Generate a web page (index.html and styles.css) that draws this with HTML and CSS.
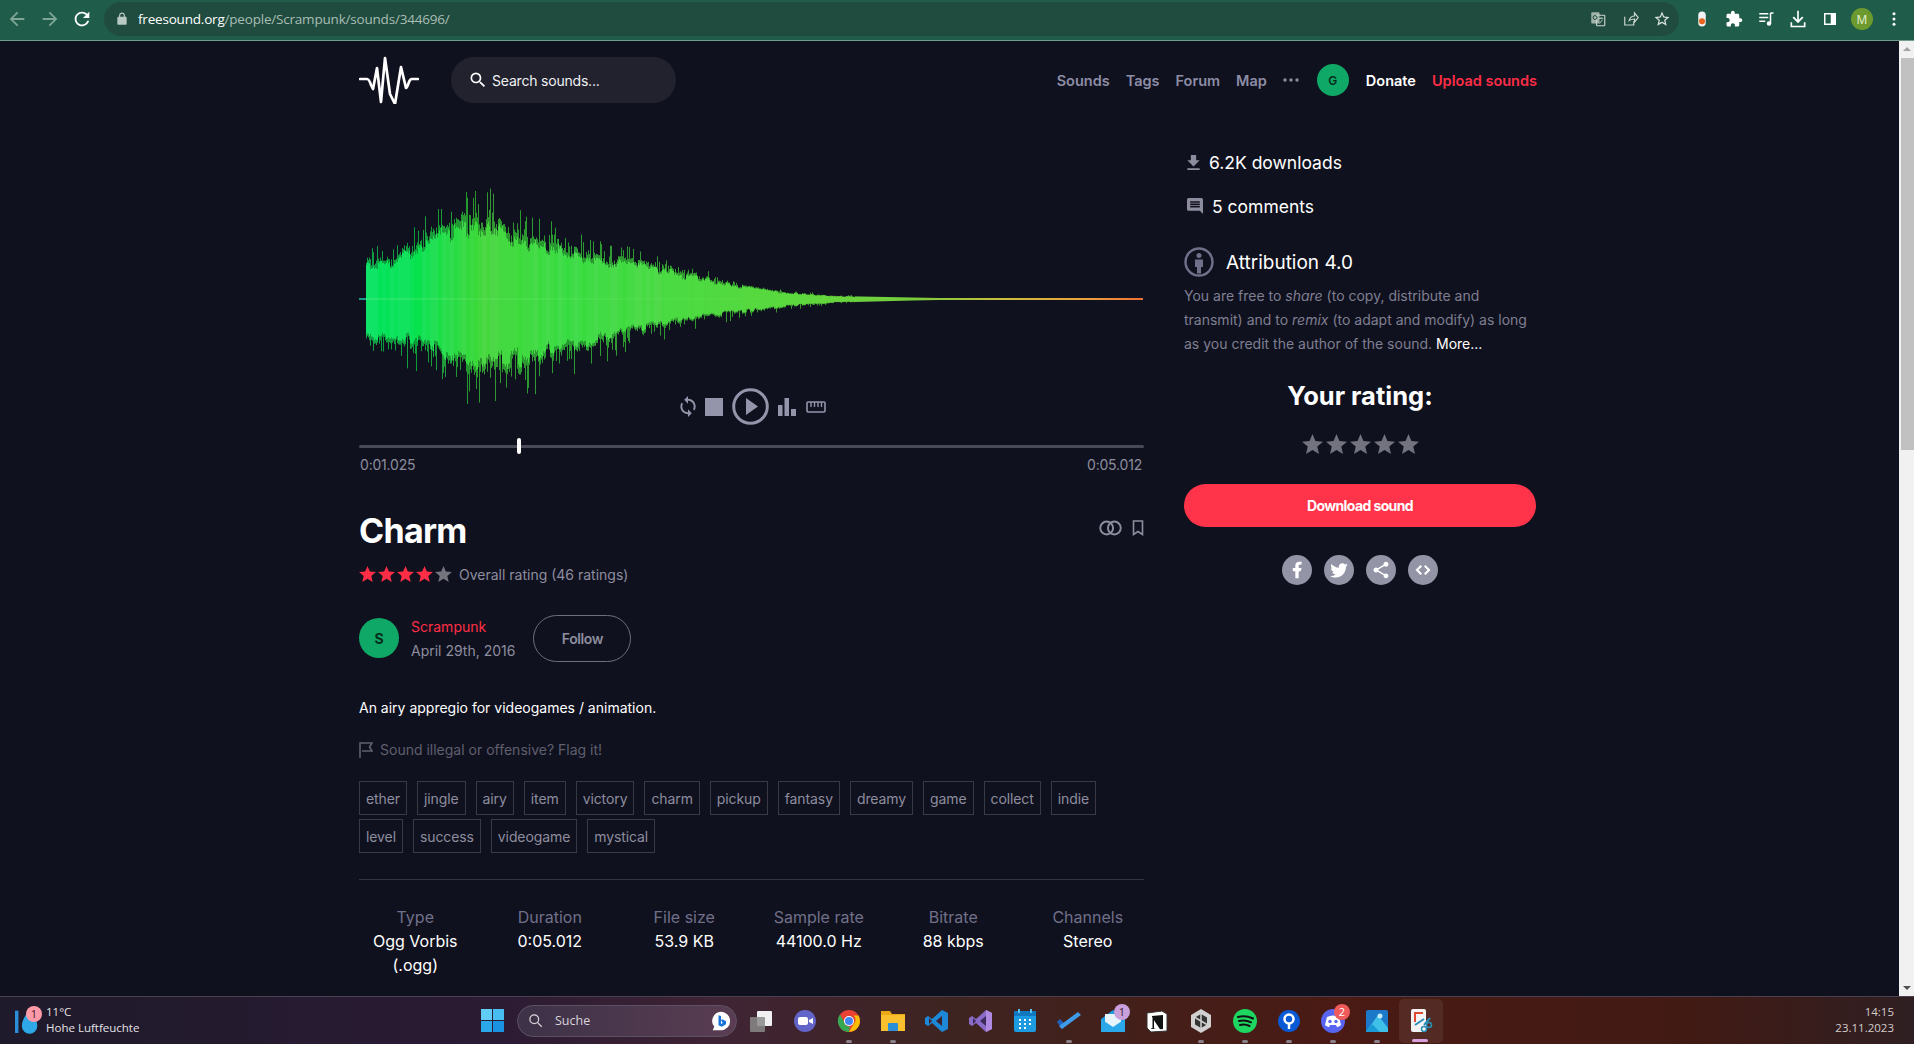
FILE: index.html
```html
<!DOCTYPE html>
<html lang="en">
<head>
<meta charset="utf-8">
<title>Charm - Freesound</title>
<link rel="stylesheet" href="styles.css">
</head>
<body>
<div class="chrome">
  <svg class="ci dim" viewBox="0 0 24 24"><path d="M20 11H7.83l5.59-5.59L12 4l-8 8 8 8 1.41-1.41L7.83 13H20v-2z"/></svg>
  <svg class="ci dim" viewBox="0 0 24 24"><path d="M12 4l-1.41 1.41L16.17 11H4v2h12.17l-5.58 5.59L12 20l8-8z"/></svg>
  <svg class="ci" viewBox="0 0 24 24"><path d="M17.65 6.35C16.2 4.9 14.21 4 12 4c-4.42 0-7.99 3.58-7.99 8s3.57 8 7.99 8c3.73 0 6.84-2.55 7.73-6h-2.08c-.82 2.33-3.04 4-5.65 4-3.31 0-6-2.69-6-6s2.69-6 6-6c1.66 0 3.14.69 4.22 1.78L13 11h7V4l-2.35 2.35z"/></svg>
  <div class="omnibox">
    <svg class="lock" viewBox="0 0 24 24"><path d="M18 8h-1V6c0-2.76-2.24-5-5-5S7 3.24 7 6v2H6c-1.1 0-2 .9-2 2v10c0 1.1.9 2 2 2h12c1.1 0 2-.9 2-2V10c0-1.1-.9-2-2-2zM9 6c0-1.66 1.34-3 3-3s3 1.34 3 3v2H9V6z"/></svg>
    <span class="url"><b>freesound.org</b>/people/Scrampunk/sounds/344696/</span>
    <svg class="oi translate" viewBox="0 0 24 24"><rect x="3" y="3" width="11" height="15" rx="1" fill="#9fb3aa"/><rect x="10" y="7" width="11" height="14" rx="1" fill="none" stroke="#c8d4ce" stroke-width="1.5"/><circle cx="8" cy="10" r="2.6" fill="none" stroke="#1f4c3e" stroke-width="1.3"/><path d="M13 11h6M16 10v2M14 18l4-5" stroke="#c8d4ce" stroke-width="1.2" fill="none"/></svg>
    <svg class="oi" viewBox="0 0 24 24"><path d="M5 9v11h12v-5M11 14c1-4 4-6 7-6V4l5 6-5 6v-4c-3 0-5 .5-7 2z" fill="none" stroke="#c8d4ce" stroke-width="1.6"/></svg>
    <svg class="oi" viewBox="0 0 24 24"><path fill="#dfe7e3" d="M22 9.24l-7.19-.62L12 2 9.19 8.63 2 9.24l5.46 4.73L5.82 21 12 17.27 18.18 21l-1.63-7.03L22 9.24zM12 15.4l-3.76 2.27 1-4.28-3.32-2.88 4.38-.38L12 6.1l1.71 4.04 4.38.38-3.32 2.88 1 4.28L12 15.4z"/></svg>
  </div>
  <div class="exts">
    <svg class="ei" viewBox="0 0 24 24"><rect x="7" y="2" width="10" height="20" rx="5" fill="#f2f2f2"/><circle cx="12" cy="15" r="4" fill="#e8641f"/></svg>
    <svg class="ei" viewBox="0 0 24 24"><path fill="#fff" d="M20.5 11H19V7c0-1.1-.9-2-2-2h-4V3.5C13 2.12 11.88 1 10.5 1S8 2.12 8 3.5V5H4c-1.1 0-1.99.9-1.99 2v3.8H3.5c1.49 0 2.7 1.21 2.7 2.7s-1.21 2.7-2.7 2.7H2V20c0 1.1.9 2 2 2h3.8v-1.5c0-1.49 1.21-2.7 2.7-2.7 1.49 0 2.7 1.21 2.7 2.7V22H17c1.1 0 2-.9 2-2v-4h1.5c1.38 0 2.5-1.12 2.5-2.5S21.88 11 20.5 11z"/></svg>
    <svg class="ei" viewBox="0 0 24 24"><path d="M3 5h12M3 10h12M3 15h8" stroke="#fff" stroke-width="2" fill="none"/><path d="M18 4v13M18 4h4" stroke="#fff" stroke-width="2" fill="none"/><circle cx="16" cy="18" r="3" fill="#fff"/></svg>
    <svg class="ei ei-dl" viewBox="0 0 24 24"><path fill="#fff" d="M13 2v11l4-4 1.500 1.500L12 17l-6.500-6.500L7 9l4 4V2zM3 16h2v4h14v-4h2v6H3z"/></svg>
    <svg class="ei" viewBox="0 0 24 24"><path fill="#fff" d="M4 4h16v16H4zM6 6v12h7V6z" fill-rule="evenodd"/></svg>
    <span class="profile">M</span>
    <svg class="ei" viewBox="0 0 24 24"><circle cx="12" cy="5" r="2" fill="#fff"/><circle cx="12" cy="12" r="2" fill="#fff"/><circle cx="12" cy="19" r="2" fill="#fff"/></svg>
  </div>
</div>

<div class="viewport">
  <div class="page">
    <div class="wrap">
      <header class="topbar">
        <svg class="logo" viewBox="0 0 60 48"><path d="M1 23h7q2 0 4 6l2 4 4-21 4 34 4-44 5 36 5 10 6-37 5 21q1 0 3-6 1-3 3-3h6" fill="none" stroke="#fff" stroke-width="2.700" stroke-linecap="round" stroke-linejoin="round"/></svg>
        <div class="search">
          <svg class="search-icon" viewBox="0 0 24 24"><path fill="#fff" d="M15.5 14h-.79l-.28-.27A6.471 6.471 0 0 0 16 9.5 6.5 6.5 0 1 0 9.5 16c1.61 0 3.09-.59 4.23-1.57l.27.28v.79l5 4.99L20.49 19l-4.99-5zm-6 0C7.01 14 5 11.99 5 9.5S7.01 5 9.5 5 14 7.01 14 9.5 11.99 14 9.5 14z"/></svg>
          <span>Search sounds...</span>
        </div>
        <nav class="nav">
          <a>Sounds</a><a>Tags</a><a>Forum</a><a>Map</a>
          <svg class="dots" viewBox="0 0 16 4"><circle cx="2" cy="2" r="1.7"/><circle cx="8" cy="2" r="1.7"/><circle cx="14" cy="2" r="1.7"/></svg>
          <span class="avatar-sm">G</span>
          <a class="donate">Donate</a>
          <a class="upload">Upload sounds</a>
        </nav>
      </header>

      <div class="columns">
        <main class="left">
          <div class="player">
            <canvas id="wave" class="wave" width="785" height="240"></canvas>
            <div class="controls">
              <svg class="c-loop" viewBox="4 1 16 22"><path d="M12 4V1L8 5l4 4V6c3.31 0 6 2.69 6 6 0 1.01-.25 1.97-.7 2.8l1.46 1.46C19.54 15.03 20 13.57 20 12c0-4.42-3.58-8-8-8zm0 14c-3.31 0-6-2.69-6-6 0-1.01.25-1.97.7-2.8L5.24 7.74C4.46 8.97 4 10.43 4 12c0 4.42 3.58 8 8 8v3l4-4-4-4v3z"/></svg>
              <span class="c-stop"></span>
              <svg class="c-play" viewBox="0 0 37 37"><circle cx="18.5" cy="18.5" r="16.8" fill="none" stroke-width="3"/><path d="M14 10l12 8.5L14 27z"/></svg>
              <svg class="c-bars" viewBox="0 0 18 18"><rect x="0" y="7" width="4.5" height="11"/><rect x="6.5" y="0" width="4.5" height="18"/><rect x="13" y="11" width="5" height="7"/></svg>
              <svg class="c-ruler" viewBox="0 0 20 12"><rect x="1" y="1" width="18" height="10" rx="1" fill="none" stroke-width="1.6"/><path d="M5 1v5M8.500 1v5M12 1v5M15.500 1v5" stroke-width="1.4"/></svg>
            </div>
          </div>
          <div class="scale"><span class="handle"></span></div>
          <div class="times"><span>0:01.025</span><span>0:05.012</span></div>

          <div class="title-row">
            <h1>Charm</h1>
            <div class="title-icons">
              <svg class="rings" viewBox="0 0 24 16"><circle cx="8" cy="8" r="6.700"/><circle cx="16" cy="8" r="6.700"/></svg>
              <svg class="bookmark" viewBox="0 0 12 16"><path d="M1.500 1h9v13.500L6 11.500l-4.500 3z"/></svg>
            </div>
          </div>

          <div class="rating">
            <svg class="star red" viewBox="2 2 20 19"><path d="M12 17.270L18.180 21l-1.640-7.030L22 9.240l-7.190-.61L12 2 9.190 8.630 2 9.240l5.460 4.730L5.820 21z"/></svg>
            <svg class="star red" viewBox="2 2 20 19"><path d="M12 17.270L18.180 21l-1.640-7.030L22 9.240l-7.190-.61L12 2 9.190 8.630 2 9.240l5.460 4.730L5.820 21z"/></svg>
            <svg class="star red" viewBox="2 2 20 19"><path d="M12 17.270L18.180 21l-1.640-7.030L22 9.240l-7.190-.61L12 2 9.190 8.630 2 9.240l5.460 4.730L5.820 21z"/></svg>
            <svg class="star red" viewBox="2 2 20 19"><path d="M12 17.270L18.180 21l-1.640-7.030L22 9.240l-7.190-.61L12 2 9.190 8.630 2 9.240l5.460 4.730L5.820 21z"/></svg>
            <svg class="star grey" viewBox="2 2 20 19"><path d="M12 17.270L18.180 21l-1.640-7.030L22 9.240l-7.190-.61L12 2 9.190 8.630 2 9.240l5.460 4.730L5.820 21z"/></svg>
            <span class="rating-text">Overall rating (46 ratings)</span>
          </div>

          <div class="author">
            <span class="avatar">S</span>
            <div class="author-text">
              <a class="author-name">Scrampunk</a>
              <span class="author-date">April 29th, 2016</span>
            </div>
            <button class="follow">Follow</button>
          </div>

          <p class="desc">An airy appregio for videogames / animation.</p>

          <div class="flag">
            <svg class="flag-icon" viewBox="0 0 14 16"><path d="M1 16V1h12l-2.500 4L13 9H3" fill="none" stroke-width="1.600"/></svg>
            <span>Sound illegal or offensive? Flag it!</span>
          </div>

          <div class="tags">
            <a>ether</a><a>jingle</a><a>airy</a><a>item</a><a>victory</a><a>charm</a><a>pickup</a><a>fantasy</a><a>dreamy</a><a>game</a><a>collect</a><a>indie</a><a>level</a><a>success</a><a>videogame</a><a>mystical</a>
          </div>

          <hr class="rule">

          <dl class="stats">
            <div><dt>Type</dt><dd>Ogg Vorbis (.ogg)</dd></div>
            <div><dt>Duration</dt><dd>0:05.012</dd></div>
            <div><dt>File size</dt><dd>53.9 KB</dd></div>
            <div><dt>Sample rate</dt><dd>44100.0 Hz</dd></div>
            <div><dt>Bitrate</dt><dd>88 kbps</dd></div>
            <div><dt>Channels</dt><dd>Stereo</dd></div>
          </dl>
        </main>

        <aside class="right">
          <div class="stat-line">
            <svg class="dl-icon" viewBox="5 3 14 17"><path d="M19 9h-4V3H9v6H5l7 7 7-7zM5 18v2h14v-2H5z"/></svg>
            <span>6.2K downloads</span>
          </div>
          <div class="stat-line second">
            <svg class="cm-icon" viewBox="2 2 20 20"><path d="M21.990 4c0-1.100-.890-2-1.990-2H4c-1.100 0-2 .900-2 2v12c0 1.100.900 2 2 2h14l4 4-.010-18zM18 14H6v-2h12v2zm0-3H6V9h12v2zm0-3H6V6h12v2z"/></svg>
            <span>5 comments</span>
          </div>
          <div class="license">
            <svg class="by-icon" viewBox="0 0 30 30"><circle cx="15" cy="15" r="13.500" fill="none" stroke-width="2.400"/><circle cx="15" cy="8.500" r="2.500" class="fillg"/><path class="fillg" d="M11 12.500h8v7.500h-2v6.500h-4V20h-2z"/></svg>
            <span>Attribution 4.0</span>
          </div>
          <p class="license-text">
            <span class="ln">You are free to <i>share</i> (to copy, distribute and</span>
            <span class="ln">transmit) and to <i>remix</i> (to adapt and modify) as long</span>
            <span class="ln">as you credit the author of the sound. <a>More...</a></span>
          </p>
          <h2 class="your-rating">Your rating:</h2>
          <div class="your-stars">
            <svg viewBox="2 2 20 19"><path d="M12 17.270L18.180 21l-1.640-7.030L22 9.240l-7.190-.61L12 2 9.190 8.630 2 9.240l5.460 4.730L5.820 21z"/></svg>
            <svg viewBox="2 2 20 19"><path d="M12 17.270L18.180 21l-1.640-7.030L22 9.240l-7.190-.61L12 2 9.190 8.630 2 9.240l5.460 4.730L5.820 21z"/></svg>
            <svg viewBox="2 2 20 19"><path d="M12 17.270L18.180 21l-1.640-7.030L22 9.240l-7.190-.61L12 2 9.190 8.630 2 9.240l5.460 4.730L5.820 21z"/></svg>
            <svg viewBox="2 2 20 19"><path d="M12 17.270L18.180 21l-1.640-7.030L22 9.240l-7.190-.61L12 2 9.190 8.630 2 9.240l5.460 4.730L5.820 21z"/></svg>
            <svg viewBox="2 2 20 19"><path d="M12 17.270L18.180 21l-1.640-7.030L22 9.240l-7.190-.61L12 2 9.190 8.630 2 9.240l5.460 4.730L5.820 21z"/></svg>
          </div>
          <button class="download">Download sound</button>
          <div class="social">
            <span><svg viewBox="0 0 24 24"><path d="M14 13.500h2.500l1-4H14v-2c0-1.030 0-2 2-2h1.500V2.140c-.326-.043-1.557-.14-2.857-.14C11.928 2 10 3.657 10 6.700v2.800H7v4h3V22h4v-8.500z"/></svg></span>
            <span><svg viewBox="0 0 24 24"><path d="M22.460 6c-.770.350-1.600.580-2.460.690.880-.530 1.560-1.370 1.880-2.380-.830.500-1.750.850-2.720 1.050C18.370 4.500 17.260 4 16 4c-2.350 0-4.270 1.920-4.270 4.290 0 .340.040.670.110.980C8.280 9.090 5.110 7.380 3 4.790c-.370.630-.580 1.370-.580 2.150 0 1.490.750 2.810 1.910 3.560-.710 0-1.370-.200-1.950-.500v.030c0 2.080 1.480 3.820 3.440 4.210a4.220 4.220 0 0 1-1.930.070 4.280 4.280 0 0 0 4 2.980 8.521 8.521 0 0 1-5.330 1.840c-.340 0-.680-.020-1.020-.060C3.440 20.290 5.700 21 8.120 21 16 21 20.330 14.460 20.330 8.790c0-.190 0-.370-.010-.560.840-.600 1.560-1.360 2.140-2.230z"/></svg></span>
            <span><svg viewBox="0 0 24 24"><path d="M18 16.080c-.760 0-1.440.300-1.960.770L8.910 12.700c.050-.230.090-.460.090-.700s-.040-.470-.090-.700l7.050-4.110c.540.500 1.250.810 2.040.810 1.660 0 3-1.340 3-3s-1.340-3-3-3-3 1.340-3 3c0 .240.040.470.090.700L8.040 9.810C7.500 9.310 6.790 9 6 9c-1.660 0-3 1.340-3 3s1.340 3 3 3c.790 0 1.500-.310 2.040-.810l7.120 4.160c-.050.210-.080.430-.080.650 0 1.610 1.310 2.920 2.920 2.920s2.920-1.310 2.920-2.920-1.310-2.920-2.920-2.920z"/></svg></span>
            <span><svg viewBox="0 0 24 24"><path d="M9 6l-6 6 6 6 1.800-1.800L6.600 12l4.200-4.200zM15 6l-1.800 1.800 4.200 4.200-4.200 4.200L15 18l6-6z"/></svg></span>
          </div>
        </aside>
      </div>
    </div>
  </div>
  <div class="scrollbar">
    <span class="sb-up"></span>
    <span class="sb-thumb"></span>
    <span class="sb-down"></span>
  </div>
</div>

<footer class="taskbar">
  <div class="weather">
    <svg class="weather-icon" viewBox="0 0 28 32"><rect x="0" y="4" width="4" height="26" fill="#2a8fd8"/><path d="M17 2c5 8 9 13 9 20a9 9 0 0 1-18 0c0-7 4-12 9-20z" fill="#2ea8e6"/></svg>
    <span class="badge pink">1</span>
    <div class="weather-text"><span>11°C</span><span>Hohe Luftfeuchte</span></div>
  </div>
  <div class="apps">
    <svg class="win" viewBox="0 0 23 23"><rect width="11" height="11" fill="#5fcdf5"/><rect x="12" width="11" height="11" fill="#48bdf0"/><rect y="12" width="11" height="11" fill="#2aa8ea"/><rect x="12" y="12" width="11" height="11" fill="#1a94e2"/></svg>
    <div class="tb-search">
      <svg class="tb-search-icon" viewBox="0 0 24 24"><circle cx="10" cy="10" r="7" fill="none" stroke="#d8d4da" stroke-width="2"/><path d="M15 15l7 7" stroke="#d8d4da" stroke-width="2"/></svg>
      <span>Suche</span>
      <svg class="bing" viewBox="0 0 24 24"><path d="M12 1a11 11 0 0 1 0 22H2l2-4a11 11 0 0 1 8-18z" fill="#fff"/><path d="M9 5v12l4 2 5-3v-4l-5-2-1 1 2 3-2 2V6z" fill="#1673d8"/></svg>
    </div>
    <div class="app"><svg viewBox="0 0 24 24"><rect x="8" y="2" width="15" height="15" rx="1" fill="#f0f0f0"/><rect x="1" y="8" width="15" height="15" rx="1" fill="#8a8a8a" opacity=".85"/></svg></div>
    <div class="app"><svg viewBox="0 0 24 24"><circle cx="12" cy="12" r="11" fill="#6264c8"/><rect x="5" y="8" width="10" height="8" rx="2" fill="#fff"/><path d="M16 11l4-2v6l-4-2z" fill="#fff"/></svg></div>
    <div class="app run"><svg viewBox="0 0 24 24"><circle cx="12" cy="12" r="11" fill="#e94235"/><path d="M21.500 6.500A11 11 0 0 1 12 23l4.800-8.300A5.500 5.500 0 0 0 16.500 6.500z" fill="#fbbc04"/><path d="M12 23A11 11 0 0 1 3 5.500l4.800 8.700a5.500 5.500 0 0 0 5 3.300z" fill="#34a853"/><circle cx="12" cy="12" r="5" fill="#fff"/><circle cx="12" cy="12" r="4" fill="#4285f4"/></svg></div>
    <div class="app run"><svg viewBox="0 0 24 24"><path d="M0 2h9l2 3h13v17H0z" fill="#e8a818"/><rect y="6" width="24" height="16" fill="#fbc02d"/><rect x="7" y="14" width="10" height="8" rx="1" fill="#2a8fd8"/></svg></div>
    <div class="app"><svg viewBox="0 0 24 24"><path d="M17 1l6 3v16l-6 3L7 14l-4 3-3-2V9l3-2 4 3z" fill="#1e88d8"/><path d="M17 7l-6 5 6 5z" fill="#3a2130"/><path d="M4 9l3 3-3 3z" fill="#3a2130"/></svg></div>
    <div class="app"><svg viewBox="0 0 24 24"><path d="M17 1l6 3v16l-6 3L7 14l-4 3-3-2V9l3-2 4 3z" fill="#8a6cc8"/><path d="M17 7l-6 5 6 5z" fill="#3c2a5a"/><path d="M4 9l3 3-3 3z" fill="#3c2a5a"/><path d="M17 1l6 3v16l-6 3z" fill="#b08ae0"/></svg></div>
    <div class="app"><svg viewBox="0 0 24 24"><rect x="1" y="2" width="22" height="21" rx="2" fill="#1c9be0"/><rect x="1" y="2" width="22" height="5" fill="#0f78c0"/><path d="M6 0v4M18 0v4" stroke="#5cc0f0" stroke-width="2"/><path d="M6 11h2M11 11h2M16 11h2M6 15h2M11 15h2M16 15h2M6 19h2M11 19h2" stroke="#fff" stroke-width="2"/></svg></div>
    <div class="app run"><svg viewBox="0 0 24 24"><path d="M0 13l3-3 6 6-4 4z" fill="#1f5fbf"/><path d="M5 20l-3-3L21 3l3 3z" fill="#3f9be8"/></svg></div>
    <div class="app"><svg viewBox="0 0 24 24"><path d="M12 1L0 10v13h24V10z" fill="#1c9be0"/><path d="M4 5h16v12l-8 3-8-3z" fill="#e8f4fb"/><path d="M0 10l12 8 12-8v13H0z" fill="#2aa8ea"/></svg><span class="badge lilac">1</span></div>
    <div class="app"><svg viewBox="0 0 24 24"><path d="M2 4l15-2 5 3v17l-16 1-4-4z" fill="#fff"/><path d="M2 4l15-2 5 3v17l-16 1-4-4z" fill="none" stroke="#333" stroke-width="1"/><path d="M7 7l11-1v14l-3 .200-6-9v8l2 .500-5 .300v-.500l1.500-.500V8.500L7 8z" fill="#111"/></svg></div>
    <div class="app run"><svg viewBox="0 0 24 24"><path d="M12 0l10 6v12l-10 6L2 18V6z" fill="#d0d0d0"/><path d="M12 5l6 3.500v7L12 19l-6-3.500v-7z" fill="#333"/><path d="M12 5v14M6 8.500l12 7" stroke="#d0d0d0" stroke-width="1.500"/></svg></div>
    <div class="app run"><svg viewBox="0 0 24 24"><circle cx="12" cy="12" r="12" fill="#1ed760"/><path d="M5 8c5-1.500 10-1 15 1.500M6 12c4-1 8-.7 12 1.300M7 16c3.500-.8 6.500-.5 9.500 1" fill="none" stroke="#111" stroke-width="2" stroke-linecap="round"/></svg></div>
    <div class="app run"><svg viewBox="0 0 24 24"><circle cx="12" cy="12" r="11" fill="#0a5ad6"/><circle cx="12" cy="10" r="4.500" fill="none" stroke="#fff" stroke-width="2.500"/><path d="M12 14v6" stroke="#fff" stroke-width="2.500"/></svg></div>
    <div class="app run"><svg viewBox="0 0 24 24"><circle cx="12" cy="12" r="12" fill="#5865f2"/><path d="M6 8c4-2 8-2 12 0l2 8c-2 1.500-3 2-4 2l-1-2H9l-1 2c-1 0-2-.5-4-2z" fill="#fff"/><circle cx="9" cy="12.500" r="1.700" fill="#5865f2"/><circle cx="15" cy="12.500" r="1.700" fill="#5865f2"/></svg><span class="badge coral">2</span></div>
    <div class="app run"><svg viewBox="0 0 24 24"><rect x="1" y="1" width="22" height="22" rx="2" fill="#1c78c8"/><path d="M1 23L13 6l10 13v4z" fill="#3fc0e8"/><circle cx="15" cy="7" r="2.500" fill="#bfe8fa"/><path d="M1 23l6-8 8 8z" fill="#1a9bd8"/></svg></div>
    <div class="app active"><svg viewBox="0 0 24 24"><rect x="2" y="0" width="15" height="23" rx="2" fill="#f4f4f4"/><path d="M5 3h9v2H7v8H5z" fill="#e04a30"/><path d="M6 16l9-6M15 16l6-7" stroke="#2a8fb8" stroke-width="2"/><circle cx="20" cy="16" r="2.500" fill="none" stroke="#2a8fb8" stroke-width="1.500"/><circle cx="15" cy="20" r="2.500" fill="none" stroke="#2a8fb8" stroke-width="1.500"/></svg></div>
  </div>
  <div class="clock"><span>14:15</span><span>23.11.2023</span></div>
</footer>
<script src="script.js"></script>
</body>
</html>
```

FILE: styles.css
```css
* { box-sizing: border-box; }
html, body { margin: 0; height: 100%; overflow: hidden; }
body {
  width: 1914px;
  height: 1044px;
  display: flex;
  flex-direction: column;
  background: #10111e;
  color: #fff;
  font-family: Inter, "Liberation Sans", sans-serif;
  font-size: 14px;
}
a { color: inherit; }

/* browser chrome */
.chrome {
  height: 41px;
  flex: none;
  display: flex;
  align-items: center;
  background: #1f5c49;
  border-bottom: 1px solid #6f9e8c;
  padding: 0 0 2px 0;
}
.ci { width: 22px; height: 22px; fill: #fff; flex: none; }
.ci.dim { fill: #7fa597; }
.ci:nth-child(1) { margin-left: 6px; margin-right: 11px; }
.ci:nth-child(2) { margin-right: 10px; }
.ci:nth-child(3) { margin-right: 11px; }
.omnibox {
  width: 1575px;
  height: 34px;
  background: #204c3f;
  border-radius: 17px;
  display: flex;
  align-items: center;
  padding: 0 8px 0 11px;
  flex: none;
}
.lock { width: 14px; height: 14px; fill: #b8c8c2; flex: none; }
.url {
  margin-left: 9px;
  font-family: "Open Sans", sans-serif;
  font-size: 13.5px;
  letter-spacing: -.2px;
  color: #a9bdb5;
  flex: 1;
}
.url b { color: #fff; font-weight: 400; }
.oi { width: 18px; height: 18px; margin-left: 14px; flex: none; }
.translate { margin-left: 0; }
.exts { display: flex; align-items: center; margin-left: 14px; gap: 14px; flex: none; }
.ei { width: 18px; height: 18px; flex: none; }
.ei-dl { width: 20px; height: 20px; margin: 0 -1px; }
.profile {
  width: 22px; height: 22px; border-radius: 50%;
  background: #6c9a2e;
  display: flex; align-items: center; justify-content: center;
  font: 12px "Open Sans", sans-serif;
  color: #e7f2d8;
  margin: 0 -2px;
}

/* viewport */
.viewport { flex: 1; min-height: 0; display: flex; }
.page { flex: 1; min-width: 0; overflow: hidden; }
.wrap { width: 1181px; margin: 0 auto; }
.scrollbar {
  width: 15px;
  flex: none;
  background: #f1f1f1;
  display: flex;
  flex-direction: column;
  align-items: stretch;
}
.sb-up { height: 17px; position: relative; }
.sb-up::after {
  content: "";
  position: absolute;
  left: 4px; top: 6px;
  border: 4px solid transparent;
  border-top: 0;
  border-bottom: 4px solid #a3a3a3;
}
.sb-thumb { height: 392px; background: #c1c1c1; margin-left: 2px; }
.sb-down { height: 17px; margin-top: auto; position: relative; }
.sb-down::after {
  content: "";
  position: absolute;
  left: 4px; top: 7px;
  border: 4px solid transparent;
  border-bottom: 0;
  border-top: 4px solid #505050;
}

/* header */
.topbar { display: flex; align-items: center; height: 48px; margin-top: 15px; padding-right: 3px; }
.logo { width: 60px; height: 48px; flex: none; }
.search {
  margin-left: 32px;
  width: 225px;
  height: 46px;
  border-radius: 23px;
  background: #21222d;
  display: flex;
  align-items: center;
  padding-left: 17px;
  font-size: 14px;
  letter-spacing: -.2px;
  color: #f0f0f4;
  gap: 4px;
}
.search-icon { width: 20px; height: 20px; flex: none; }
.nav { margin-left: auto; display: flex; align-items: center; font-size: 14.5px; font-weight: 600; color: #8d8da6; }
.nav a { margin-right: 16px; }
.dots { width: 16px; height: 4px; fill: #8d8da6; margin-right: 18px; }
.avatar-sm {
  width: 32px; height: 32px; border-radius: 50%;
  background: #0fa866;
  color: #062c1c;
  font-size: 12px;
  font-weight: 600;
  display: flex; align-items: center; justify-content: center;
  margin-right: 17px;
}
.nav .donate { color: #fff; }
.nav .upload { color: #ff2d46; margin-right: 0; }

/* columns */
.columns { display: grid; grid-template-columns: 785px 352px; column-gap: 40px; }
.left { margin-top: 76px; min-width: 0; }
.right { margin-top: 46px; min-width: 0; }

/* player */
.player { position: relative; height: 240px; }
.wave { display: block; width: 785px; height: 240px; }
.controls {
  position: absolute;
  left: 0; right: 0; top: 208px;
  height: 37px;
  display: flex;
  align-items: center;
  justify-content: center;
  gap: 9px;
  padding-left: 2px;
  fill: #9494ab;
  stroke: #9494ab;
}
.controls svg path, .controls svg rect { stroke: inherit; }
.c-loop { width: 16px; height: 21px; stroke: none; }
.c-stop { width: 18px; height: 18px; background: #9494ab; }
.c-play { width: 37px; height: 37px; }
.controls .c-loop path, .controls .c-play path, .controls .c-bars rect { stroke: none; }
.c-bars { width: 18px; height: 18px; stroke: none; }
.c-ruler { width: 20px; height: 12px; fill: none; margin-left: 1px; }

.scale { position: relative; height: 3px; margin-top: 25px; background: #4a4a57; border-radius: 2px; }
.handle {
  position: absolute;
  left: 158px; top: -7px;
  width: 4px; height: 16px;
  background: #fff;
  border-radius: 2px;
}
.times {
  display: flex;
  justify-content: space-between;
  margin-top: 7px;
  padding: 0 2px 0 1px;
  line-height: 20px;
  color: #8d8d9f;
  font-size: 14px;
  letter-spacing: -.2px;
}

/* title */
.title-row { display: flex; align-items: center; justify-content: space-between; margin-top: 36px; height: 40px; }
h1 { margin: 0; font-size: 34px; line-height: 40px; font-weight: 700; letter-spacing: -.7px; }
.title-icons { display: flex; align-items: center; gap: 10px; margin-top: -6px; }
.rings { width: 23px; height: 16px; fill: none; stroke: #8d8da0; stroke-width: 2; }
.bookmark { width: 12px; height: 16px; fill: none; stroke: #8d8da0; stroke-width: 1.6; }

.rating { display: flex; align-items: center; margin-top: 13px; height: 20px; gap: 2px; }
.star { width: 17px; height: 16px; flex: none; }
.star.red { fill: #ff2d46; }
.star.grey { fill: #74747f; }
.rating-text { margin-left: 5px; color: #8d8d9f; font-size: 14px; }

.author { display: flex; align-items: center; margin-top: 30px; height: 48px; }
.avatar {
  width: 40px; height: 40px; border-radius: 50%;
  background: #0fa866;
  color: #062c1c;
  font-size: 14px; font-weight: 700;
  display: flex; align-items: center; justify-content: center;
  flex: none;
}
.author-text { margin-left: 12px; padding-top: 2px; display: flex; flex-direction: column; line-height: 24px; font-size: 14px; }
.author-name { color: #ff2d46; }
.author-date { color: #8d8d9f; }
.follow {
  margin-left: 18px;
  width: 98px; height: 47px;
  border-radius: 24px;
  border: 1px solid #6f6f78;
  background: transparent;
  color: #8d8d9f;
  font: 600 14px Inter, sans-serif;
  letter-spacing: -.4px;
}

.desc { margin: 34px 0 0; line-height: 24px; font-size: 14px; }
.flag { display: flex; align-items: center; margin-top: 18px; line-height: 24px; color: #5f5f6e; gap: 7px; font-size: 14px; }
.flag-icon { width: 14px; height: 16px; stroke: #5f5f6e; flex: none; }

.tags { display: flex; flex-wrap: wrap; gap: 4px 10px; margin-top: 19px; width: 760px; }
.tags a {
  height: 34px;
  padding: 0 6px;
  border: 1px solid #3a3a47;
  display: flex;
  align-items: center;
  color: #8d8d9f;
  font-size: 14px;
  letter-spacing: -.1px;
}

.rule { margin: 26px 0 0; border: 0; height: 1px; background: #33343f; }

.stats {
  display: grid;
  grid-template-columns: repeat(6, 134.5px);
  margin: 25px -11px 0;
  text-align: center;
  line-height: 24px;
  font-size: 16px;
}
.stats > div { padding: 0 12px; }
.stats dt { color: #70708a; }
.stats dd { margin: 0; }

/* right column */
.stat-line { display: flex; align-items: center; height: 24px; font-size: 17.5px; gap: 9px; padding-left: 3px; }
.stat-line.second { margin-top: 20px; }
.dl-icon { width: 13px; height: 15px; fill: #8d8d9f; flex: none; }
.cm-icon { width: 16px; height: 16px; fill: #8d8d9f; flex: none; }
.license { display: flex; align-items: center; margin-top: 29px; height: 30px; gap: 12px; font-size: 19px; }
.by-icon { width: 30px; height: 30px; stroke: #70708a; flex: none; }
.fillg { fill: #70708a; stroke: none; }
.license-text { margin: 7px 0 0; line-height: 24px; font-size: 14px; color: #7f7f92; }
.ln { display: block; }
.license-text a { color: #fff; }
.your-rating { margin: 24px 0 0; text-align: center; font-size: 25.5px; line-height: 32px; font-weight: 700; }
.your-stars { display: flex; justify-content: center; margin-top: 22px; height: 20px; gap: 3px; }
.your-stars svg { width: 21px; height: 20px; fill: #73737f; }
.download {
  display: block;
  width: 100%;
  height: 43px;
  margin-top: 30px;
  border: 0;
  border-radius: 22px;
  background: #ff3349;
  color: #fff;
  font: 700 14px Inter, sans-serif;
  letter-spacing: -.6px;
}
.social { display: flex; justify-content: center; gap: 12px; margin-top: 28px; }
.social span {
  width: 30px; height: 30px; border-radius: 50%;
  background: #9494a7;
  display: flex; align-items: center; justify-content: center;
}
.social svg { width: 20px; height: 20px; fill: #fff; }

/* taskbar */
.taskbar {
  height: 48px;
  flex: none;
  display: flex;
  align-items: center;
  background: linear-gradient(90deg, #1e1a2b 0, #2b1b33 26%, #3f2434 38%, #3e2420 50%, #4a1a14 70%, #421a14 88%, #2f1f22 100%);
  border-top: 1px solid #4a4050;
  font-family: "Open Sans", sans-serif;
  font-size: 11.5px;
  color: #e6e2e6;
}
.weather { display: flex; align-items: center; position: relative; margin-left: 15px; width: 466px; }
.weather-icon { width: 24px; height: 28px; flex: none; }
.weather-text { margin-left: 7px; display: flex; flex-direction: column; line-height: 16px; margin-top: -2px; }
.badge {
  position: absolute;
  width: 16px; height: 16px; border-radius: 50%;
  display: flex; align-items: center; justify-content: center;
  font-size: 11px;
  color: #3a1a2a;
}
.weather .badge { left: 11px; top: 0; }
.badge.pink { background: #ff9aa8; }
.app .badge { right: 5px; top: 5px; }
.badge.lilac { background: #c9a0dc; }
.badge.coral { background: #ee5a5a; color: #fff; }
.apps { display: flex; align-items: center; }
.win { width: 23px; height: 23px; flex: none; }
.tb-search {
  margin-left: 13px;
  width: 220px; height: 32px;
  border-radius: 16px;
  background: linear-gradient(90deg, #3d3248, #5a3d52);
  border: 1px solid #5e5064;
  display: flex; align-items: center;
  padding: 0 5px 0 10px;
  font-size: 12.5px;
  color: #d8d4da;
  flex: none;
}
.tb-search-icon { width: 15px; height: 15px; flex: none; }
.tb-search span { margin-left: 12px; flex: 1; }
.bing { width: 20px; height: 20px; flex: none; }
.app {
  width: 44px; height: 44px;
  position: relative;
  display: flex; align-items: center; justify-content: center;
  flex: none;
}
.app svg { width: 24px; height: 24px; }
.tb-search + .app { margin-left: 2px; }
.app.run::after {
  content: "";
  position: absolute;
  left: 19px; bottom: 0;
  width: 6px; height: 3px;
  border-radius: 2px;
  background: #8a8088;
}
.app.active { background: rgba(255,255,255,.07); border-radius: 5px; }
.app.active::after {
  content: "";
  position: absolute;
  left: 13px; bottom: 1px;
  width: 16px; height: 3px;
  border-radius: 2px;
  background: #d8a0dc;
}
.clock {
  margin-left: auto;
  margin-right: 20px;
  display: flex;
  flex-direction: column;
  align-items: flex-end;
  line-height: 16px;
  color: #d4cccc;
  margin-top: -2px;
}
```

FILE: script.js
```js
(function () {
  var c = document.getElementById('wave');
  var g = c.getContext('2d');
  var seed = 344696;
  function rnd() {
    seed = (seed * 1664525 + 1013904223) % 4294967296;
    return seed / 4294967296;
  }
  var top = [[0,36],[30,39],[46,52],[70,66],[100,76],[117,80],[140,70],[163,60],[214,47],[265,36],[316,26],[367,14],[418,6.5],[469,3],[546,1.5],[573,1],[778,1]];
  var bot = [[0,39],[51,46],[87,64],[117,72],[163,62],[214,48],[265,32],[316,22],[367,14],[418,7.5],[469,3.5],[546,1.5],[573,1],[778,1]];
  function env(t, x) {
    for (var i = 1; i < t.length; i++) {
      if (x <= t[i][0]) {
        var a = t[i - 1], b = t[i];
        return a[1] + (b[1] - a[1]) * (x - a[0]) / (b[0] - a[0]);
      }
    }
    return 1;
  }
  var stops = [[0,[8,228,98]],[50,[12,226,84]],[117,[70,216,62]],[200,[60,220,70]],[420,[90,216,62]],[546,[120,205,60]],[640,[205,190,60]],[720,[235,160,60]],[778,[240,110,50]]];
  function col(x) {
    for (var i = 1; i < stops.length; i++) {
      if (x <= stops[i][0]) {
        var a = stops[i - 1], b = stops[i], k = (x - a[0]) / (b[0] - a[0]);
        return [0, 1, 2].map(function (n) { return Math.round(a[1][n] + (b[1][n] - a[1][n]) * k); });
      }
    }
    return stops[stops.length - 1][1];
  }
  var cy = 119, ox = 7;
  g.fillStyle = '#1f9a8a';
  g.fillRect(0, cy - 1, 7, 2);
  var modT = 1, modB = 1, band = 0;
  for (var x = 0; x < 777; x++) {
    var cl = col(x);
    if (x % 4 === 0) {
      modT = 0.8 + rnd() * 0.26;
      modB = 0.8 + rnd() * 0.26;
      band = x < 300 ? (rnd() < 0.3 ? 7 : (rnd() < 0.3 ? -6 : 0)) : 0;
    }
    var r = Math.max(0, cl[0] + band), gn = cl[1], b = Math.max(0, cl[2] + band);
    var ut = env(top, x), ub = env(bot, x);
    var big = Math.max(ut, ub) > 3;
    var bt = big ? ut * modT * (0.92 + rnd() * 0.1) : ut;
    var bb = big ? ub * modB * (0.92 + rnd() * 0.1) : ub;
    if (big) {
      var spikeUp = rnd() < 0.32 ? ut * (1.02 + Math.pow(rnd(), 2) * 0.42) : bt * (1.06 + rnd() * 0.08);
      var spikeDn = rnd() < 0.32 ? ub * (1.02 + Math.pow(rnd(), 2) * 0.58) : bb * (1.06 + rnd() * 0.08);
      g.fillStyle = 'rgb(' + Math.round(r * 0.55 + 8) + ',' + Math.round(gn * 0.66 + 8) + ',' + Math.round(b * 0.55 + 12) + ')';
      g.fillRect(ox + x, cy - spikeUp, 1, spikeUp + spikeDn);
    }
    g.fillStyle = 'rgb(' + r + ',' + gn + ',' + b + ')';
    g.fillRect(ox + x, cy - bt, 1, bt + bb);
  }
  var grd = g.createLinearGradient(7, 0, 500, 0);
  grd.addColorStop(0, 'rgba(120,240,140,.25)');
  grd.addColorStop(1, 'rgba(120,240,100,0)');
  g.fillStyle = grd;
  g.fillRect(7, cy - 1, 500, 2);
})();
```
